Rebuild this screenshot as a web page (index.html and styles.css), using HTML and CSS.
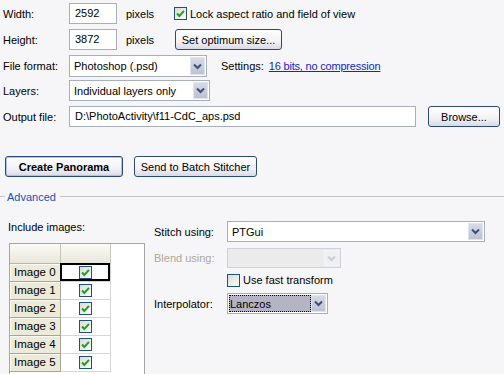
FILE: index.html
```html
<!DOCTYPE html>
<html>
<head>
<meta charset="UTF-8">
<title>Panorama</title>
<link rel="stylesheet" href="styles.css">
</head>
<body>
	<!-- 출력 설정 -->
	<div class="top">
		<div class="row r1">
			<span class="lbl">Width:</span>
			<span class="field num">2592</span>
			<span class="unit">pixels</span>
			<span class="check on"><svg width="11" height="11" viewBox="0 0 11 11"><path d="M2 5.5 L4.3 8 L9 2.8" fill="none" stroke="#21a121" stroke-width="2"/></svg></span>
			<span class="cklbl">Lock aspect ratio and field of view</span>
		</div>
		<div class="row r2">
			<span class="lbl">Height:</span>
			<span class="field num">3872</span>
			<span class="unit">pixels</span>
			<span class="btn opt">Set optimum size...</span>
		</div>
		<div class="row r3">
			<span class="lbl">File format:</span>
			<span class="select fmt"><span class="val">Photoshop (.psd)</span><span class="arrow"><svg width="9" height="7" viewBox="0 0 9 7"><path d="M1 1.5 L4.5 5 L8 1.5" fill="none" stroke="#3d4f78" stroke-width="2"/></svg></span></span>
			<span class="settings">Settings:</span>
			<a class="link" href="#">16 bits, no compression</a>
		</div>
		<div class="row r4">
			<span class="lbl">Layers:</span>
			<span class="select lay"><span class="val">Individual layers only</span><span class="arrow"><svg width="9" height="7" viewBox="0 0 9 7"><path d="M1 1.5 L4.5 5 L8 1.5" fill="none" stroke="#3d4f78" stroke-width="2"/></svg></span></span>
		</div>
		<div class="row r5">
			<span class="lbl">Output file:</span>
			<span class="field out">D:\PhotoActivity\f11-CdC_aps.psd</span>
			<span class="btn browse">Browse...</span>
		</div>
	</div>

	<div class="actions">
		<span class="btn create">Create Panorama</span>
		<span class="btn batch">Send to Batch Stitcher</span>
	</div>

	<div class="legend"><span class="dash"></span><span class="ltext">Advanced</span><span class="rule"></span></div>

	<!-- 고급 설정 -->
	<div class="adv">
		<div class="left">
			<div class="inc">Include images:</div>
			<div class="grid">
				<table>
					<tr class="head"><th class="c1"></th><th class="c2"></th></tr>
					<tr><td class="rh">Image 0</td><td class="cell sel"><span class="check on"><svg width="11" height="11" viewBox="0 0 11 11"><path d="M2 5.5 L4.3 8 L9 2.8" fill="none" stroke="#21a121" stroke-width="2"/></svg></span></td></tr>
					<tr><td class="rh">Image 1</td><td class="cell"><span class="check on"><svg width="11" height="11" viewBox="0 0 11 11"><path d="M2 5.5 L4.3 8 L9 2.8" fill="none" stroke="#21a121" stroke-width="2"/></svg></span></td></tr>
					<tr><td class="rh">Image 2</td><td class="cell"><span class="check on"><svg width="11" height="11" viewBox="0 0 11 11"><path d="M2 5.5 L4.3 8 L9 2.8" fill="none" stroke="#21a121" stroke-width="2"/></svg></span></td></tr>
					<tr><td class="rh">Image 3</td><td class="cell"><span class="check on"><svg width="11" height="11" viewBox="0 0 11 11"><path d="M2 5.5 L4.3 8 L9 2.8" fill="none" stroke="#21a121" stroke-width="2"/></svg></span></td></tr>
					<tr><td class="rh">Image 4</td><td class="cell"><span class="check on"><svg width="11" height="11" viewBox="0 0 11 11"><path d="M2 5.5 L4.3 8 L9 2.8" fill="none" stroke="#21a121" stroke-width="2"/></svg></span></td></tr>
					<tr><td class="rh">Image 5</td><td class="cell"><span class="check on"><svg width="11" height="11" viewBox="0 0 11 11"><path d="M2 5.5 L4.3 8 L9 2.8" fill="none" stroke="#21a121" stroke-width="2"/></svg></span></td></tr>
				</table>
			</div>
		</div>
		<div class="right">
			<div class="row s1">
				<span class="lbl2">Stitch using:</span>
				<span class="select stitch"><span class="val">PTGui</span><span class="arrow"><svg width="9" height="7" viewBox="0 0 9 7"><path d="M1 1.5 L4.5 5 L8 1.5" fill="none" stroke="#3d4f78" stroke-width="2"/></svg></span></span>
			</div>
			<div class="row s2">
				<span class="lbl2 dis">Blend using:</span>
				<span class="select blend"><span class="val"></span><span class="arrow"><svg width="9" height="7" viewBox="0 0 9 7"><path d="M1 1.5 L4.5 5 L8 1.5" fill="none" stroke="#c9cdd6" stroke-width="2"/></svg></span></span>
			</div>
			<div class="row s3">
				<span class="check"></span>
				<span class="cklbl">Use fast transform</span>
			</div>
			<div class="row s4">
				<span class="lbl2">Interpolator:</span>
				<span class="select interp"><span class="val"><span class="hl">Lanczos</span></span><span class="arrow"><svg width="9" height="7" viewBox="0 0 9 7"><path d="M1 1.5 L4.5 5 L8 1.5" fill="none" stroke="#3d4f78" stroke-width="2"/></svg></span></span>
			</div>
		</div>
	</div>
</body>
</html>
```

FILE: styles.css
```css
/* 전체 문서 */
* {
	box-sizing: border-box;
}

body {
	margin: 0;
	width: 504px;
	height: 374px;
	overflow: hidden;
	background-color: #f6f6f8;
	font-family: "Liberation Sans", Arial, sans-serif;
	font-size: 11px;
	color: #000;
}

.row {
	display: flex;
	align-items: center;
	height: 21px;
}

.top {
	padding-top: 3px;
}

.r2 { margin-top: 5px; }
.r3 { margin-top: 5px; height: 22px; }
.r4 { margin-top: 3px; }
.r5 { margin-top: 5px; }

.lbl {
	width: 69px;
	padding-left: 3px;
}

.field {
	height: 21px;
	border: 1px solid #a7afbb;
	background-color: white;
	padding: 3px 5px;
}

.num {
	width: 48px;
}

.out {
	width: 347px;
}

.unit {
	width: 57px;
	padding-left: 9px;
}

.check {
	display: inline-flex;
	align-items: center;
	justify-content: center;
	width: 13px;
	height: 13px;
	border: 1px solid #1c5180;
	background: linear-gradient(135deg, #dcdcd6, #fbfbf9);
}

.cklbl {
	padding-left: 3px;
}

/* 버튼 */
.btn {
	display: inline-flex;
	align-items: center;
	justify-content: center;
	height: 21px;
	border: 1px solid #2c4a78;
	border-radius: 3px;
	background: linear-gradient(#ffffff, #f2f2f6 60%, #d9dae6);
}

.opt {
	width: 107px;
	margin-left: 1px;
}

.browse {
	width: 72px;
	margin-left: 12px;
}

.actions {
	display: flex;
	margin-top: 29px;
	padding-left: 5px;
	height: 21px;
}

.create {
	width: 118px;
	font-weight: bold;
	box-shadow: inset 0 0 0 1px #a9c4ee;
}

.batch {
	width: 123px;
	margin-left: 11px;
}

/* 셀렉트 */
.select {
	display: flex;
	height: 100%;
	border: 1px solid #a7afbb;
	background-color: white;
	padding: 1px;
}

.select .val {
	flex: 1;
	padding: 2px 3px;
	display: flex;
	align-items: center;
}

.arrow {
	width: 15px;
	display: flex;
	align-items: center;
	justify-content: center;
	border: 1px solid #dfe3ec;
	background: linear-gradient(#d7dbe6, #bcc2d1);
}

.fmt { width: 138px; }
.lay { width: 141px; }

.settings {
	padding-left: 14px;
}

.link {
	margin-left: 5px;
	color: #1028c8;
	letter-spacing: -0.2px;
}

/* 고급 설정 */
.legend {
	display: flex;
	align-items: center;
	margin-top: 13px;
	height: 13px;
}

.dash {
	width: 5px;
	border-top: 1px solid #c3c3c3;
}

.ltext {
	color: #1c4fb9;
	padding: 0 4px 0 2px;
}

.rule {
	flex: 1;
	border-top: 1px solid #c3c3c3;
}

.adv {
	display: flex;
	margin-top: 17px;
}

.left {
	width: 154px;
	padding-left: 8px;
}

.inc {
	height: 14px;
	line-height: 14px;
}

.grid {
	margin-top: 9px;
	margin-left: 1px;
	width: 136px;
	height: 140px;
	border: 1px solid #a5a5a5;
	background-color: white;
}

table {
	border-collapse: collapse;
}

th {
	height: 19px;
	padding: 0;
	border-right: 1px solid #c8c6b8;
	border-bottom: 1px solid #b8b5a6;
	background: linear-gradient(#fbfaf5, #e9e7db);
}

.c1, .c2 {
	width: 50px;
}

td {
	height: 18px;
	padding: 0;
}

.rh {
	width: 50px;
	padding-left: 4px;
	font-size: 11.5px;
	background-color: #ecead9;
	border-right: 1px solid #a7a596;
	border-bottom: 1px solid #a7a596;
	box-shadow: inset 1px 1px 0 #fbfaf3;
}

.cell {
	text-align: center;
	border-right: 1px solid #d6d6d6;
	border-bottom: 1px solid #d6d6d6;
}

.cell .check {
	vertical-align: middle;
}

.sel {
	outline: 2px solid #000;
	outline-offset: -2px;
}

.right {
	flex: 1;
}

.lbl2 {
	width: 73px;
}

.dis {
	color: #aca899;
}

.s1 { margin-top: 1px; }
.s1 .select { width: 258px; }

.s2 { margin-top: 6px; height: 20px; }
.blend {
	width: 114px;
	border-color: #cfd2d8;
	background-color: #ebebeb;
}
.blend .arrow {
	background: #eef0f4;
	border-color: #f3f4f7;
}

.s3 {
	margin-top: 5px;
	height: 14px;
	padding-left: 73px;
}

.s4 { margin-top: 6px; height: 21px; }
.interp { width: 101px; }
.interp .val {
	padding: 0;
}
.hl {
	display: flex;
	align-items: center;
	width: 100%;
	height: 100%;
	padding-left: 1px;
	background-color: #b5b4c4;
	outline: 1px dotted #000;
	outline-offset: -1px;
}
```
